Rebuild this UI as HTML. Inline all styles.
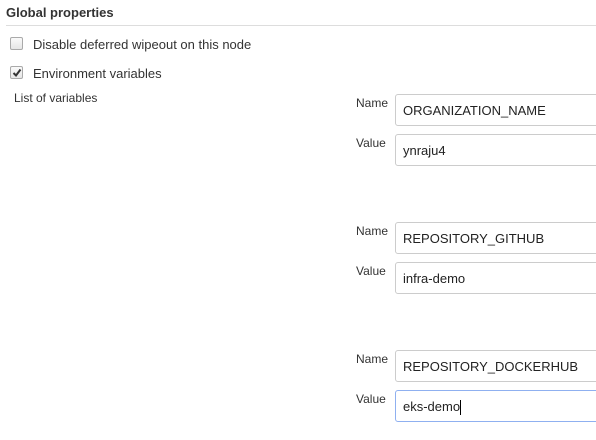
<html><head><style>
body{margin:0;width:596px;height:440px;background:#fff;font-family:"Liberation Sans",Arial,sans-serif;font-size:13px;color:#333;position:relative;overflow:hidden}
.a{position:absolute;white-space:nowrap}
.cb{position:absolute;width:11px;height:11px;border:1px solid #aaa;border-radius:2px;background:linear-gradient(#fafafa,#e6e6e6)}
.in{position:absolute;left:395px;width:210px;height:30px;border:1px solid #ccc;border-radius:3px;box-sizing:border-box;height:32px;font-size:13px;padding-left:7px;line-height:31px;color:#222}
</style></head><body>
<div class="a" style="left:6px;top:5px;font-weight:bold;font-size:13px;color:#333">Global properties</div>
<div class="a" style="left:6px;top:25px;width:590px;height:1px;background:#ddd"></div>
<div class="cb" style="left:10px;top:37px"></div>
<div class="a" style="left:33px;top:37px">Disable deferred wipeout on this node</div>
<div class="cb" style="left:10px;top:66px"></div>
<svg class="a" style="left:11px;top:67px" width="12" height="12"><path d="M2.5 6 L5 8.5 L9.5 2.5" stroke="#333" stroke-width="2" fill="none"/></svg>
<div class="a" style="left:33px;top:66px">Environment variables</div>
<div class="a" style="left:14px;top:91px;font-size:12px">List of variables</div>

<div class="a" style="left:356px;top:96px;font-size:12px">Name</div>
<div class="in" style="top:94px">ORGANIZATION_NAME</div>
<div class="a" style="left:356px;top:136px;font-size:12px">Value</div>
<div class="in" style="top:134px">ynraju4</div>

<div class="a" style="left:356px;top:224px;font-size:12px">Name</div>
<div class="in" style="top:222px">REPOSITORY_GITHUB</div>
<div class="a" style="left:356px;top:264px;font-size:12px">Value</div>
<div class="in" style="top:262px">infra-demo</div>

<div class="a" style="left:356px;top:352px;font-size:12px">Name</div>
<div class="in" style="top:350px">REPOSITORY_DOCKERHUB</div>
<div class="a" style="left:356px;top:392px;font-size:12px">Value</div>
<div class="in" style="top:390px;border-color:#8fb0f0">eks-demo<span style="display:inline-block;width:1px;height:15px;background:#000;vertical-align:middle"></span></div>
</body></html>
